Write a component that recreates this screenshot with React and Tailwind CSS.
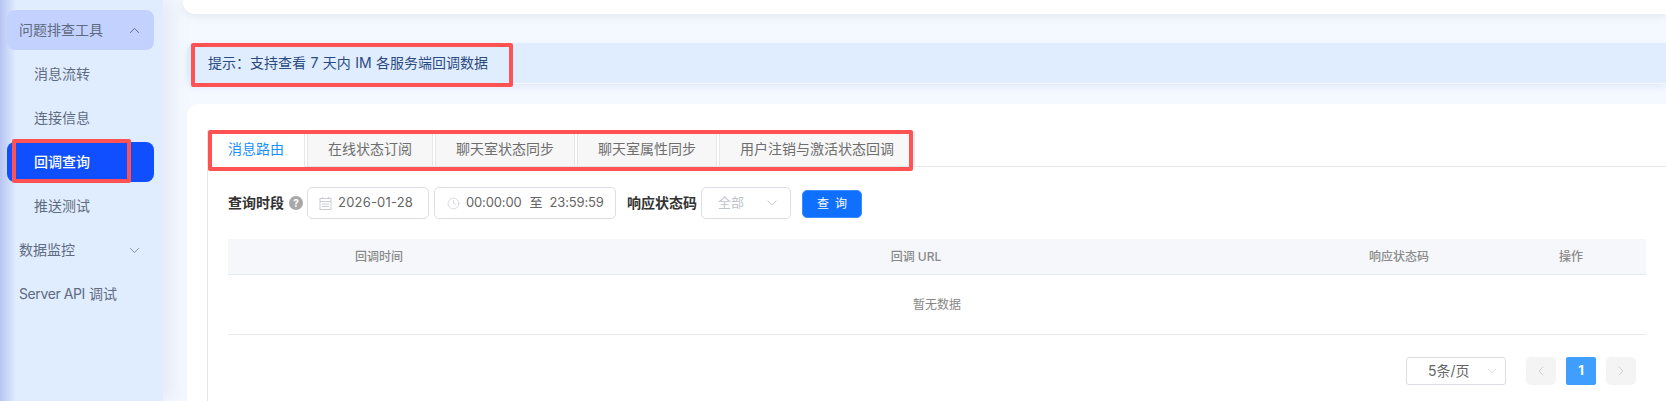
import React from 'react';
import { ChevronUp, ChevronDown, ChevronLeft, ChevronRight, Clock } from 'lucide-react';

const FONT = 'font-["Inter","Noto_Sans_CJK_SC",sans-serif]';

const TABS = ['消息路由', '在线状态订阅', '聊天室状态同步', '聊天室属性同步', '用户注销与激活状态回调'];

const COLUMNS = [
    { label: '回调时间', width: 'w-[302px]' },
    { label: '回调 URL', width: 'w-[772px]' },
    { label: '响应状态码', width: 'w-[194px]' },
    { label: '操作', width: 'w-[150px]' },
];

function MenuItem({ children, active, parent, top, icon }) {
    let tone = 'text-[#5f6b80]';
    if (active) tone = 'bg-[#0f4fff] text-white font-medium';
    if (parent) tone = 'bg-[#c3d1ff] text-[#5f6b80]';
    return (
        <div className={`h-10 shrink-0 rounded-lg flex items-center justify-between text-sm pr-[11px] ${parent || top ? 'pl-3' : 'pl-[27px]'} ${tone}`}>
            <span>{children}</span>
            {icon}
        </div>
    );
}

function Sidebar() {
    return (
        <aside className="relative w-[163px] shrink-0 h-full flex flex-col gap-1 pt-2.5 pl-[7px] pr-[9px] bg-[linear-gradient(90deg,#b7c4f2_0,#e0edff_16px)] shadow-[10px_0_18px_rgba(120,130,150,0.1)]">
            <MenuItem parent icon={<ChevronUp size={17} strokeWidth={1.4} className="text-[#5f6b80]" />}>问题排查工具</MenuItem>
            <MenuItem>消息流转</MenuItem>
            <MenuItem>连接信息</MenuItem>
            <MenuItem active>回调查询</MenuItem>
            <MenuItem>推送测试</MenuItem>
            <MenuItem top icon={<ChevronDown size={17} strokeWidth={1} className="text-[#5f6b80]" />}>数据监控</MenuItem>
            <MenuItem top>
                <span className="tracking-[-0.4px]">Server API</span> 调试
            </MenuItem>
        </aside>
    );
}

function Tabs() {
    return (
        <div className="flex gap-0.5">
            {TABS.map((tab, i) => (
                <div
                    key={tab}
                    className={`h-9 px-5 flex items-center border border-[#e6e6e6] text-sm relative ${i === 0 ? 'bg-white text-[#1890ff] border-b-white' : 'bg-[#f7f7f7] text-[#6e6e6e]'}`}
                >
                    {tab}
                </div>
            ))}
        </div>
    );
}

function CalendarIcon() {
    return (
        <svg width="13" height="13" viewBox="0 0 13 13" fill="none" stroke="#c9ccd4" strokeWidth="1">
            <rect x="1" y="1.5" width="11" height="11" />
            <path d="M1 4.5h11M3.5 0v2M9.5 0v2M3 7h7M3 9.5h7" />
        </svg>
    );
}

function Filters() {
    const field = 'h-8 border border-[#dcdee6] rounded-[5px] flex items-center text-[13px] text-[#666]';
    return (
        <div className="flex items-center h-8 mt-5">
            <span className="text-sm font-semibold text-[#333] w-[56px]">查询时段</span>
            <span className="ml-[5px] w-[14px] h-[14px] rounded-full bg-[#a8a8a8] text-white text-[10px] font-bold flex items-center justify-center">?</span>
            <div className={`${field} ml-[4px] w-[122px] pl-[11px] gap-[6px]`}>
                <CalendarIcon />
                <span className="tracking-[0.2px]">2026-01-28</span>
            </div>
            <div className={`${field} ml-[5px] w-[182px] pl-3`}>
                <Clock size={13} strokeWidth={1} className="text-[#b8bcc6]" />
                <span className="ml-[6px] tracking-[-0.15px]">00:00:00</span>
                <span className="ml-[8px]">至</span>
                <span className="ml-[7px] tracking-[-0.15px]">23:59:59</span>
            </div>
            <span className="ml-[11px] text-sm font-semibold text-[#333]">响应状态码</span>
            <div className={`${field} ml-[4px] w-[90px] pl-4 pr-[10px] justify-between text-[#c0c4cc]`}>
                <span>全部</span>
                <ChevronDown size={16} strokeWidth={1} className="text-[#a8acb6]" />
            </div>
            <button className="ml-[11px] mt-0.5 w-[60px] h-7 rounded-[5px] bg-[#0f6fff] border border-[#3d8bff] text-white text-xs flex items-center justify-center gap-1.5">
                <span>查</span>
                <span>询</span>
            </button>
        </div>
    );
}

function Table() {
    return (
        <div className="mt-5 w-[1418px]">
            <div className="flex h-9 bg-[#f5f7fa] border-b border-[#e6e9f0] text-xs font-medium text-[#8a8a8a]">
                {COLUMNS.map(col => (
                    <div key={col.label} className={`${col.width} flex items-center justify-center`}>{col.label}</div>
                ))}
            </div>
            <div className="h-[60px] flex items-center justify-center border-b border-[#e8eaf0] text-xs text-[#888]">暂无数据</div>
        </div>
    );
}

function Pagination() {
    return (
        <div className="mt-[22px] w-[1408px] flex items-center text-[13px]">
            <div className="ml-auto w-[100px] h-7 border border-[#dcdee6] rounded-[3px] flex items-center justify-between pl-[21px] pr-[6px] text-[#666] text-sm">
                <span>5条/页</span>
                <ChevronDown size={14} strokeWidth={1} className="text-[#b8bcc6]" />
            </div>
            <div className="ml-5 w-[30px] h-7 rounded-[5px] bg-[#f4f4f5] flex items-center justify-center">
                <ChevronLeft size={16} strokeWidth={1.2} className="text-[#c0c4cc]" />
            </div>
            <div className="ml-2.5 w-[30px] h-7 rounded-[2px] bg-[#409eff] text-white font-bold flex items-center justify-center">1</div>
            <div className="ml-2.5 w-[30px] h-7 rounded-[5px] bg-[#f4f4f5] flex items-center justify-center">
                <ChevronRight size={16} strokeWidth={1.2} className="text-[#c0c4cc]" />
            </div>
        </div>
    );
}

export default function App() {
    return (
        <div className={`${FONT} relative w-[1666px] h-[401px] overflow-hidden flex bg-[#f4f8ff]`}>
            <Sidebar />

            <main className="flex-1 min-w-0 flex flex-col pl-6">
                {/* Top card, only its lower edge is in view */}
                <div className="relative h-3.5 -ml-1 bg-white rounded-bl-xl shadow-[0_2px_8px_rgba(120,130,150,0.14)] shrink-0" />

                <div className="relative mt-[29px] h-[41px] shrink-0 rounded-l-lg bg-[#e0edff] border-b border-[#f4f8ff] shadow-[0_3px_6px_rgba(190,210,245,0.35)] pl-[21px] flex items-center text-sm text-[#2b4a80] [word-spacing:0.5px]">
                    提示：支持查看 7 天内 IM 各服务端回调数据
                </div>

                <section className="relative mt-5 flex-1 bg-white rounded-tl-xl pl-5 pt-[27px]">
                    <Tabs />
                    <div className="-mt-px border-t border-l border-[#e6e6e6] pl-5 h-[300px]">
                        <Filters />
                        <Table />
                        <Pagination />
                    </div>
                </section>
            </main>

            {/* Red annotation boxes drawn over the screenshot */}
            <div className="absolute left-[12px] top-[139px] w-[119px] h-[44px] border-4 border-[#ff5252] rounded-[2px]" />
            <div className="absolute left-[191px] top-[43px] w-[322px] h-[44px] border-4 border-[#ff5252] rounded-[2px]" />
            <div className="absolute left-[208px] top-[130px] w-[705px] h-[41px] border-4 border-[#ff5252] rounded-[2px]" />
        </div>
    );
}
